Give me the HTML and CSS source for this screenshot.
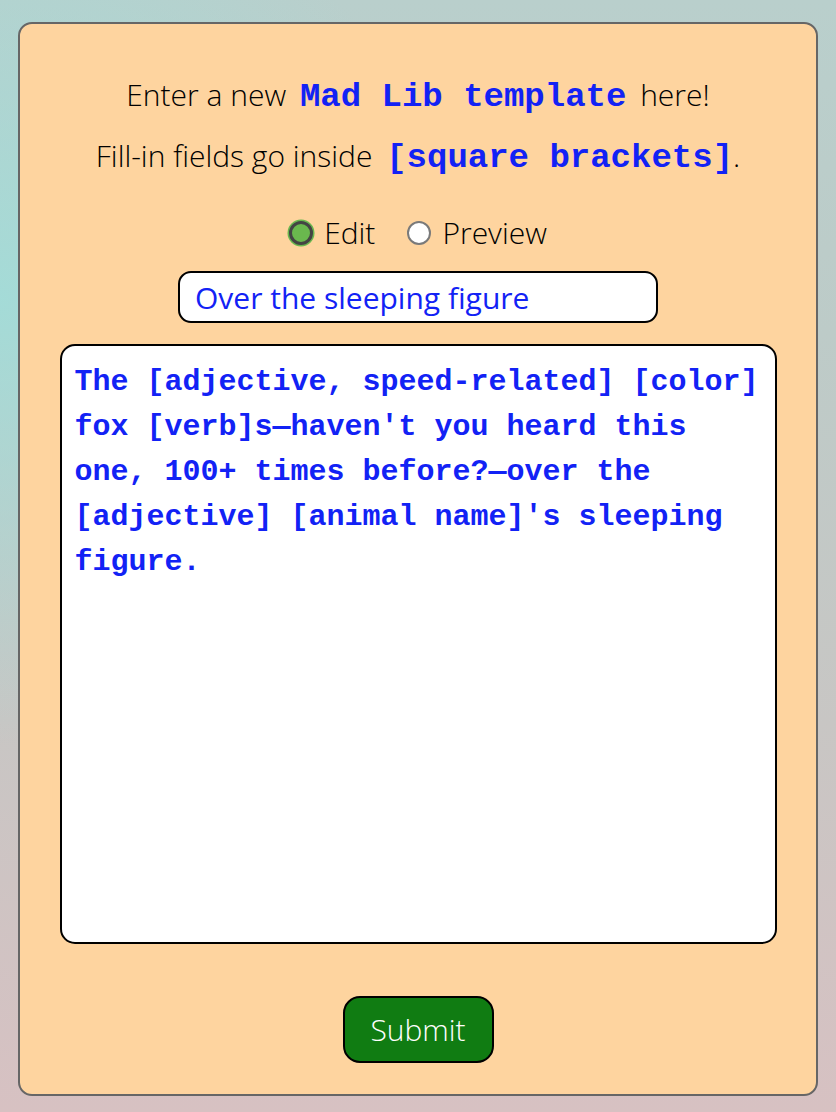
FILE: index.html
```html
<!DOCTYPE html>
<html lang="en">
<head>
<meta charset="utf-8">
<title>Mad Lib template</title>
<link rel="stylesheet" href="styles.css">
</head>
<body>
<main class="card">
  <p class="intro">Enter a new <code class="code">Mad Lib template</code> here!</p>
  <p class="intro">Fill-in fields go inside <code class="code code-end">[square brackets]</code>.</p>
  <div class="modes">
    <label class="mode"><input type="radio" name="mode" class="radio" checked> Edit</label>
    <label class="mode"><input type="radio" name="mode" class="radio"> Preview</label>
  </div>
  <input class="title-input" type="text" value="Over the sleeping figure">
  <textarea class="template">The [adjective, speed-related] [color] fox [verb]s—haven't you heard this one, 100+ times before?—over the [adjective] [animal name]'s sleeping figure.</textarea>
  <button class="submit" type="button">Submit</button>
</main>
</body>
</html>
```
FILE: styles.css
```css
html, body {
  margin: 0;
  height: 100%;
}
body {
  box-sizing: border-box;
  padding: 22px 18px 16px;
  background:
    radial-gradient(ellipse 55% 40% at 0% 27%, rgba(160, 222, 218, 0.85), rgba(160, 222, 218, 0) 100%),
    linear-gradient(to bottom, #b9cfcc 0%, #bdcbc8 30%, #c8c6c4 65%, #d7c1c2 100%);
  font-family: "Open Sans", "Liberation Sans", sans-serif;
  font-weight: 300;
  font-size: 30px;
  color: #000;
}
.card {
  box-sizing: border-box;
  height: 1074px;
  background: #fed49f;
  border: 2px solid #666;
  border-radius: 14px;
  display: flex;
  flex-direction: column;
  align-items: center;
  padding: 50px 40px 30px;
}
.intro {
  margin: 0 0 19px;
  line-height: 42px;
  text-align: center;
}
.code {
  font-family: "Liberation Mono", "Courier New", monospace;
  font-weight: 700;
  font-size: 34px;
  line-height: 1;
  color: #1222f5;
  margin: 0 6px;
}
.code-end { margin-right: 0; }
.modes {
  display: flex;
  gap: 32px;
  margin-top: 17px;
  line-height: 40px;
}
.mode {
  display: flex;
  align-items: center;
  gap: 11px;
}
.radio {
  appearance: none;
  -webkit-appearance: none;
  margin: 0;
  width: 24px;
  height: 24px;
  border-radius: 50%;
  background: #fff;
  border: 2px solid #7a7a7a;
  box-sizing: border-box;
}
.radio:checked {
  background: #6ab84e;
  border: 3px solid #444;
  box-shadow: 0 0 0 1.5px #6ab84e;
}
.title-input {
  box-sizing: border-box;
  width: 480px;
  height: 52px;
  margin-top: 18px;
  border: 2px solid #000;
  border-radius: 13px;
  padding: 0 15px;
  font-family: "Open Sans", "Liberation Sans", sans-serif;
  font-weight: 400;
  font-size: 30px;
  color: #1222f5;
  background: #fff;
  outline: none;
}
.template {
  box-sizing: border-box;
  width: 717px;
  height: 600px;
  margin-top: 21px;
  border: 2px solid #000;
  border-radius: 15px;
  padding: 14px 13px;
  font-family: "Liberation Mono", "Courier New", monospace;
  font-weight: 700;
  font-size: 30px;
  line-height: 45px;
  color: #1222f5;
  background: #fff;
  resize: none;
  outline: none;
}
.submit {
  margin-top: 52px;
  width: 151px;
  height: 67px;
  border: 2px solid #000;
  border-radius: 17px;
  background: #107c12;
  color: #fff;
  font-family: "Open Sans", "Liberation Sans", sans-serif;
  font-weight: 300;
  font-size: 30px;
  padding: 0;
}
```
